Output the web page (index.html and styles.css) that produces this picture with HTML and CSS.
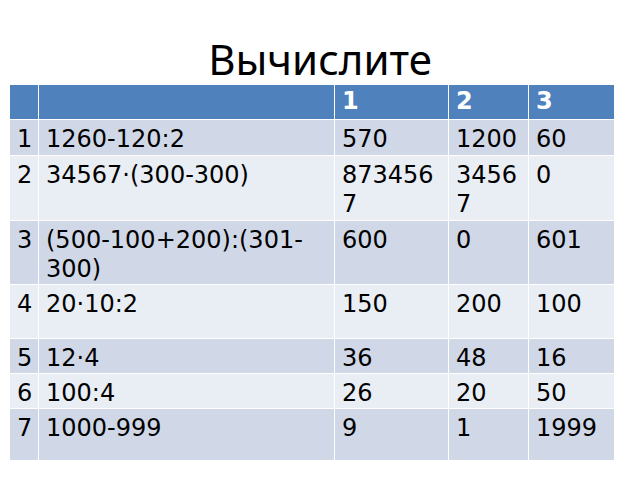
FILE: index.html
```html
<!DOCTYPE html>
<html lang="ru">
<head>
<meta charset="utf-8">
<title>Вычислите</title>
<link rel="stylesheet" href="styles.css">
</head>
<body>
<div class="slide">
  <h1 class="title">Вычислите</h1>
  <table class="grid">
    <colgroup>
      <col class="c0"><col class="c1"><col class="c2"><col class="c3"><col class="c4">
    </colgroup>
    <tr class="head">
      <td></td><td></td><td>1</td><td>2</td><td>3</td>
    </tr>
    <tr class="odd r1">
      <td>1</td><td>1260-120:2</td><td class="num">570</td><td class="num">1200</td><td class="num">60</td>
    </tr>
    <tr class="even r2">
      <td>2</td><td>34567·(300-300)</td><td class="num">8734567</td><td class="num">34567</td><td class="num">0</td>
    </tr>
    <tr class="odd r3">
      <td>3</td><td>(500-100+200):(301-300)</td><td class="num">600</td><td class="num">0</td><td class="num">601</td>
    </tr>
    <tr class="even r4">
      <td>4</td><td>20·10:2</td><td class="num">150</td><td class="num">200</td><td class="num">100</td>
    </tr>
    <tr class="odd r5">
      <td>5</td><td>12·4</td><td class="num">36</td><td class="num">48</td><td class="num">16</td>
    </tr>
    <tr class="even r6">
      <td>6</td><td>100:4</td><td class="num">26</td><td class="num">20</td><td class="num">50</td>
    </tr>
    <tr class="odd r7">
      <td>7</td><td>1000-999</td><td class="num">9</td><td class="num">1</td><td class="num">1999</td>
    </tr>
  </table>
</div>
</body>
</html>
```

FILE: styles.css
```css
html, body {
  margin: 0;
  padding: 0;
  background: #ffffff;
}

.slide {
  width: 640px;
  height: 480px;
  display: flex;
  flex-direction: column;
  font-family: "DejaVu Sans", sans-serif;
}

.title {
  margin: 0;
  padding-top: 34px;
  height: 50px;
  line-height: 50px;
  font-family: "Noto Sans", "DejaVu Sans", sans-serif;
  font-weight: normal;
  font-size: 42px;
  color: #000000;
  text-align: center;
}

.grid {
  margin-left: 9px;
  border-collapse: separate;
  border-spacing: 1px;
  table-layout: fixed;
  width: 606px;
}

.c0 { width: 28px; }
.c1 { width: 295px; }
.c2 { width: 113px; }
.c3 { width: 79px; }
.c4 { width: 85px; }

.grid td {
  padding: 5px 7px 0 7px;
  vertical-align: top;
  font-size: 24px;
  line-height: 29px;
  color: #000000;
  overflow: hidden;
}

.grid td.num {
  word-break: break-all;
}

.head td {
  background: #4f81bd;
  color: #ffffff;
  font-weight: bold;
  padding-top: 2px;
}

.odd td { background: #d0d8e8; }
.even td { background: #e9edf4; }

.head { height: 34px; }
.r1 { height: 35px; }
.r2 { height: 64px; }
.r3 { height: 63px; }
.r4 { height: 53px; }
.r5 { height: 34px; }
.r6 { height: 34px; }
.r7 { height: 51px; }
```
